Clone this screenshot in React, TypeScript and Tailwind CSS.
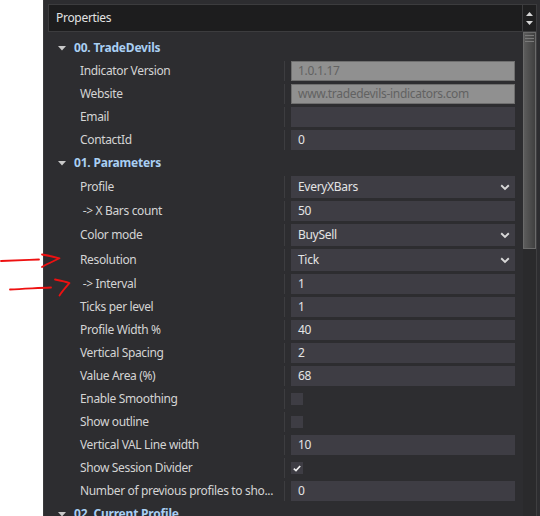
import React from "react";

type Kind = "text" | "disabled" | "select" | "check";
type Prop = { label: string; kind: Kind; value?: string; checked?: boolean };
type Cat = { title: string; props: Prop[] };

const cats: Cat[] = [
  {
    title: "00. TradeDevils",
    props: [
      { label: "Indicator Version", kind: "disabled", value: "1.0.1.17" },
      { label: "Website", kind: "disabled", value: "www.tradedevils-indicators.com" },
      { label: "Email", kind: "text", value: "" },
      { label: "ContactId", kind: "text", value: "0" },
    ],
  },
  {
    title: "01. Parameters",
    props: [
      { label: "Profile", kind: "select", value: "EveryXBars" },
      { label: " -> X Bars count", kind: "text", value: "50" },
      { label: "Color mode", kind: "select", value: "BuySell" },
      { label: "Resolution", kind: "select", value: "Tick" },
      { label: " -> Interval", kind: "text", value: "1" },
      { label: "Ticks per level", kind: "text", value: "1" },
      { label: "Profile Width %", kind: "text", value: "40" },
      { label: "Vertical Spacing", kind: "text", value: "2" },
      { label: "Value Area (%)", kind: "text", value: "68" },
      { label: "Enable Smoothing", kind: "check", checked: false },
      { label: "Show outline", kind: "check", checked: false },
      { label: "Vertical VAL Line width", kind: "text", value: "10" },
      { label: "Show Session Divider", kind: "check", checked: true },
      { label: "Number of previous profiles to sho...", kind: "text", value: "0" },
    ],
  },
  { title: "02. Current Profile", props: [] },
];

function Chevron() {
  return (
    <svg width="10" height="7" viewBox="0 0 10 7">
      <path d="M1.2 1.3 L5 5 L8.8 1.3" stroke="#d8d8d8" strokeWidth="1.9" fill="none" />
    </svg>
  );
}

function Tri() {
  return (
    <svg width="8" height="5" viewBox="0 0 8 5">
      <path d="M0 0 H8 L4 4.5 Z" fill="#c9c9c9" />
    </svg>
  );
}

function Check() {
  return (
    <svg width="8" height="7" viewBox="0 0 8 7">
      <path d="M0.8 3.6 L3 5.6 L7.2 1" stroke="#f0f0f0" strokeWidth="1.7" fill="none" />
    </svg>
  );
}

function Value({ p }: { p: Prop }) {
  if (p.kind === "disabled") {
    return (
      <div className="w-[224px] h-[20px] bg-[#909090] border border-[#6f6f6f] flex items-center pl-[6px] text-[12px] tracking-[-0.3px] text-[#626262] leading-none">
        {p.value}
      </div>
    );
  }
  if (p.kind === "select") {
    return (
      <div className="w-[224px] h-[22px] bg-[#3e3d44] flex items-center justify-between pl-[7px] pr-[5px] text-[12px] tracking-[-0.3px] text-[#e4e4e4] leading-none">
        <span>{p.value}</span>
        <Chevron />
      </div>
    );
  }
  if (p.kind === "check") {
    return (
      <div className="h-[20px] flex items-center">
        <div className="w-[12px] h-[12px] bg-[#3e3d44] flex items-center justify-center">
          {p.checked ? <Check /> : null}
        </div>
      </div>
    );
  }
  return (
    <div className="w-[224px] h-[20px] bg-[#3e3d44] flex items-center pl-[7px] text-[12px] tracking-[-0.3px] text-[#e4e4e4] leading-none">
      {p.value}
    </div>
  );
}

function Arrows() {
  return (
    <svg className="absolute left-0 top-0 pointer-events-none" width="540" height="516" viewBox="0 0 540 516">
      <g stroke="#ee1111" strokeWidth="1.8" fill="none" strokeLinecap="round" strokeLinejoin="round">
        <path d="M1 261 C12 260.5 26 260 39 259.5" />
        <path d="M42 254.5 C48 255.5 54 256.8 59.5 258.3 C54 261 47 264 42 267" />
        <path d="M10 289.5 C24 289 38 288 51 287.5" />
        <path d="M55 279.5 C60 280.5 65 281.5 69.5 283 C66 287 62 291.5 59.5 295.5" />
      </g>
    </svg>
  );
}

export default function App() {
  return (
    <div className="relative w-[540px] h-[516px] bg-white overflow-hidden font-['Noto_Sans',sans-serif] flex">
      <div className="w-[43px] shrink-0 bg-white" />
      <div className="flex-1 bg-[#2d2d30] flex flex-col border-l border-[#3a3a3c]">
        <div className="h-[4px] shrink-0" />
        <div className="flex h-[28px] shrink-0 pl-[4px]">
          <div className="w-[475px] h-full bg-[#1d1d1e] border border-[#3c3c3e] flex items-center pl-[7px] text-[12px] tracking-[-0.3px] text-[#e2e2e2]">
            Properties
          </div>
          <div className="w-[14px] h-full bg-[#1f1f20] border-y border-r border-[#3c3c3e] flex flex-col items-center justify-center gap-[5px]">
            <svg width="7" height="4" viewBox="0 0 7 4"><path d="M0 4 L3.5 0 L7 4 Z" fill="#d6d6d6" /></svg>
            <svg width="7" height="4" viewBox="0 0 7 4"><path d="M0 0 L7 0 L3.5 4 Z" fill="#d6d6d6" /></svg>
          </div>
        </div>
        <div className="flex flex-1 pl-[4px] min-h-0">
          <div className="w-[475px] flex flex-col pt-[3px]">
            {cats.map((c) => (
              <div key={c.title} className="flex flex-col">
                <div className="h-[23px] pt-[3px] pl-[10px] flex items-center shrink-0">
                  <Tri />
                  <span className="ml-[8px] text-[12px] font-bold tracking-[-0.2px] text-[#a9cff3] leading-none">{c.title}</span>
                </div>
                {c.props.map((p) => (
                  <div key={p.label} className="flex shrink-0 pt-[3px]">
                    <div className="w-[237px] border-r border-[#3d3d40] flex items-center pl-[32px] text-[12px] tracking-[-0.35px] text-[#d4d4d4] whitespace-pre leading-none">
                      {p.label}
                    </div>
                    <div className="pl-[6px]">
                      <Value p={p} />
                    </div>
                  </div>
                ))}
              </div>
            ))}
          </div>
          <div className="w-[14px] bg-[#2a2a2c] border-r border-[#3e3e40] flex flex-col">
            <div className="h-[217px] bg-gradient-to-r from-[#5c5c5c] to-[#404040] border border-[#6a6a6a] flex flex-col items-center pt-[2px] gap-[2px]">
              <div className="w-[9px] h-[1px] bg-[#7a7a7a]" />
              <div className="w-[9px] h-[1px] bg-[#7a7a7a]" />
              <div className="w-[9px] h-[1px] bg-[#7a7a7a]" />
            </div>
          </div>
        </div>
      </div>
      <Arrows />
    </div>
  );
}
